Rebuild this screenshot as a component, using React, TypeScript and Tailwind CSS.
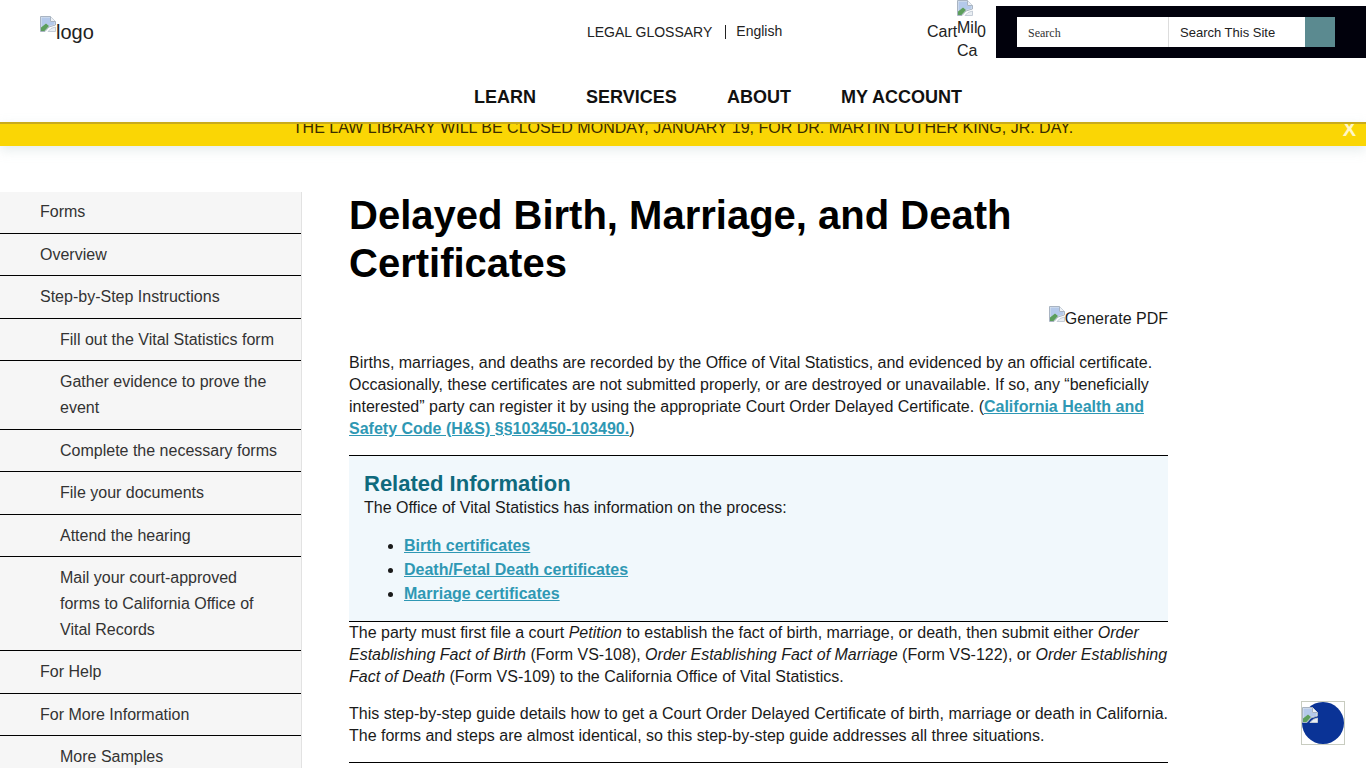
const steps: { label: string[]; sub?: boolean }[] = [
  { label: ["Forms"] },
  { label: ["Overview"] },
  { label: ["Step-by-Step Instructions"] },
  { label: ["Fill out the Vital Statistics form"], sub: true },
  { label: ["Gather evidence to prove the", "event"], sub: true },
  { label: ["Complete the necessary forms"], sub: true },
  { label: ["File your documents"], sub: true },
  { label: ["Attend the hearing"], sub: true },
  { label: ["Mail your court-approved", "forms to California Office of", "Vital Records"], sub: true },
  { label: ["For Help"] },
  { label: ["For More Information"] },
  { label: ["More Samples"], sub: true },
];

// chrome's broken image placeholder
function BrokenImage({ className = "" }: { className?: string }) {
  return (
    <svg width="16" height="16" viewBox="0 0 16 16" className={`inline-block shrink-0 ${className}`}>
      <path d="M0.5 0.5H10.5L15.5 5.5V9L9 11L5 15.5H0.5Z" fill="#dfe6ee" stroke="#a9b4c2" />
      <path d="M1.5 1.5H10V6H14.5V8.5L9 10L6 7.5L1.5 11.5Z" fill="#b4c9ea" />
      <path d="M1 15V11.5L6 7.5L9 10L4.5 15Z" fill="#5c9e5c" />
      <path d="M10.5 0.5V5.5H15.5" fill="#eef2f6" stroke="#a9b4c2" />
      <path d="M15.5 11V15.5H8L11 12.5Z" fill="#e9eef3" stroke="#c4ccd6" />
    </svg>
  );
}

function Link({ children }: { children: React.ReactNode }) {
  return <a className="font-bold text-[#2f98b4] underline">{children}</a>;
}

function SideNav() {
  return (
    <nav className="w-[302px] shrink-0 mt-[46px] border-r border-[#e2e2e2] bg-[#f6f6f6]">
      {steps.map((s, i) => (
        <div
          key={s.label[0]}
          className={`border-b border-black pb-2 pr-3 text-[16px] leading-[25.6px] text-[#333] ${i === 0 ? "pt-[7px]" : "pt-2"} ${s.sub ? "pl-[60px]" : "pl-10"}`}
        >
          {s.label.map((l) => (
            <div key={l}>{l}</div>
          ))}
        </div>
      ))}
    </nav>
  );
}

export default function App() {
  return (
    <div className="relative h-[768px] overflow-hidden bg-white font-['Liberation_Sans',Arial,sans-serif] text-[#111]">
      <header className="h-[122px] flex flex-col">
        <div className="flex h-[70px]">
          <div className="w-[587px] shrink-0 pl-10 pt-4">
            <div className="flex items-start text-[20px] leading-[23px] text-[#222]">
              <BrokenImage />
              <span className="mt-[5px]">logo</span>
            </div>
          </div>
          <div className="w-[340px] shrink-0 flex items-start pt-[23px] text-[14px] leading-4 text-[#222]">
            <span className="mt-[1px]">LEGAL GLOSSARY</span>
            <span className="ml-[13px] mt-[2px] w-px h-[14px] bg-[#222]" />
            <span className="ml-[10px]">English</span>
          </div>
          <div className="w-[69px] shrink-0 flex items-start text-[16px] text-[#222]">
            <span className="mt-[23px] leading-[18px] w-[30px]">Cart</span>
            <div className="w-[21px] flex flex-col leading-[22px] overflow-hidden">
              <BrokenImage />
              <span className="mt-[1px]">Mil</span>
              <span className="mt-[1px]">Ca</span>
            </div>
            <span className="-ml-px mt-[23px] leading-[18px] bg-white">0</span>
          </div>
          <div className="flex-1 mt-[6px] h-[52px] bg-[#01010c] pl-[21px] pt-[11px]">
            <div className="flex h-[30px] w-[318px]">
              <div className="w-[152px] bg-white border-r border-[#ddd] pl-[11px] font-['Liberation_Serif',serif] text-[12px] leading-[32px] text-[#333]">
                Search
              </div>
              <div className="w-[136px] bg-white pl-[11px] text-[13px] leading-[31px] text-[#222]">Search This Site</div>
              <div className="w-[30px] bg-[#5b8a90]" />
            </div>
          </div>
        </div>
        <nav className="flex pl-[474px] text-[18px] font-bold leading-[21px] text-[#111] pt-[17px]">
          <span className="w-[112px]">LEARN</span>
          <span className="w-[141px]">SERVICES</span>
          <span className="w-[114px]">ABOUT</span>
          <span>MY ACCOUNT</span>
        </nav>
      </header>

      <div className="relative h-[24px] overflow-hidden border-t-2 border-[#c9ab1d] bg-[#fad605] shadow-[0_4px_12px_rgba(180,200,200,0.35)]">
        <div className="text-center text-[16px] leading-[18px] -mt-[5px] text-[#3a2c00]">
          THE LAW LIBRARY WILL BE CLOSED MONDAY, JANUARY 19, FOR DR. MARTIN LUTHER KING, JR. DAY.
        </div>
        <span className="absolute right-[10px] top-[-7px] text-[20px] font-bold leading-[24px] text-[#fff6c8]">X</span>
      </div>

      <div className="flex">
        <SideNav />
        <main className="ml-[47px] w-[819px] pt-[45px] text-[16px] leading-[22px] text-[#1a1a1a]">
          <h1 className="text-[40px] font-bold leading-[48px] text-black">
            Delayed Birth, Marriage, and Death Certificates
          </h1>
          <div className="mt-[20px] flex justify-end items-start leading-[22px]">
            <BrokenImage className="-mt-[1px]" />
            <span className="mt-[1px]">Generate PDF</span>
          </div>
          <p className="mt-[22px]">
            Births, marriages, and deaths are recorded by the Office of Vital Statistics, and evidenced by an official
            certificate. Occasionally, these certificates are not submitted properly, or are destroyed or unavailable.
            If so, any “beneficially interested” party can register it by using the appropriate Court Order Delayed
            Certificate. (<Link>California Health and Safety Code (H&amp;S) §§103450-103490.</Link>)
          </p>
          <section className="mt-[15px] h-[167px] border-y border-black bg-[#f1f8fc] pl-[15px] pt-[14px]">
            <h2 className="text-[22px] font-bold leading-[28px] text-[#0f6a7d]">Related Information</h2>
            <p className="-mt-[1px]">The Office of Vital Statistics has information on the process:</p>
            <ul className="mt-[15px] list-disc pl-10 leading-[24px]">
              <li><Link>Birth certificates</Link></li>
              <li><Link>Death/Fetal Death certificates</Link></li>
              <li><Link>Marriage certificates</Link></li>
            </ul>
          </section>
          <p>
            The party must first file a court <i>Petition</i> to establish the fact of birth, marriage, or death, then
            submit either <i>Order Establishing Fact of Birth</i> (Form VS-108), <i>Order Establishing Fact of Marriage</i>{" "}
            (Form VS-122), or <i>Order Establishing Fact of Death</i> (Form VS-109) to the California Office of Vital
            Statistics.
          </p>
          <p className="mt-[15px] whitespace-nowrap">
            This step-by-step guide details how to get a Court Order Delayed Certificate of birth, marriage or death in California.
            <br />
            The forms and steps are almost identical, so this step-by-step guide addresses all three situations.
          </p>
          <hr className="mt-[15px] border-black" />
        </main>
      </div>

      {/* accessibility widget */}
      <div className="fixed left-[1301px] top-[701px] h-[44px] w-[44px] border border-[#c8ccc0]">
        <div className="h-[42px] w-[42px] rounded-full bg-[#0a3396]">
          <BrokenImage />
        </div>
      </div>
    </div>
  );
}
